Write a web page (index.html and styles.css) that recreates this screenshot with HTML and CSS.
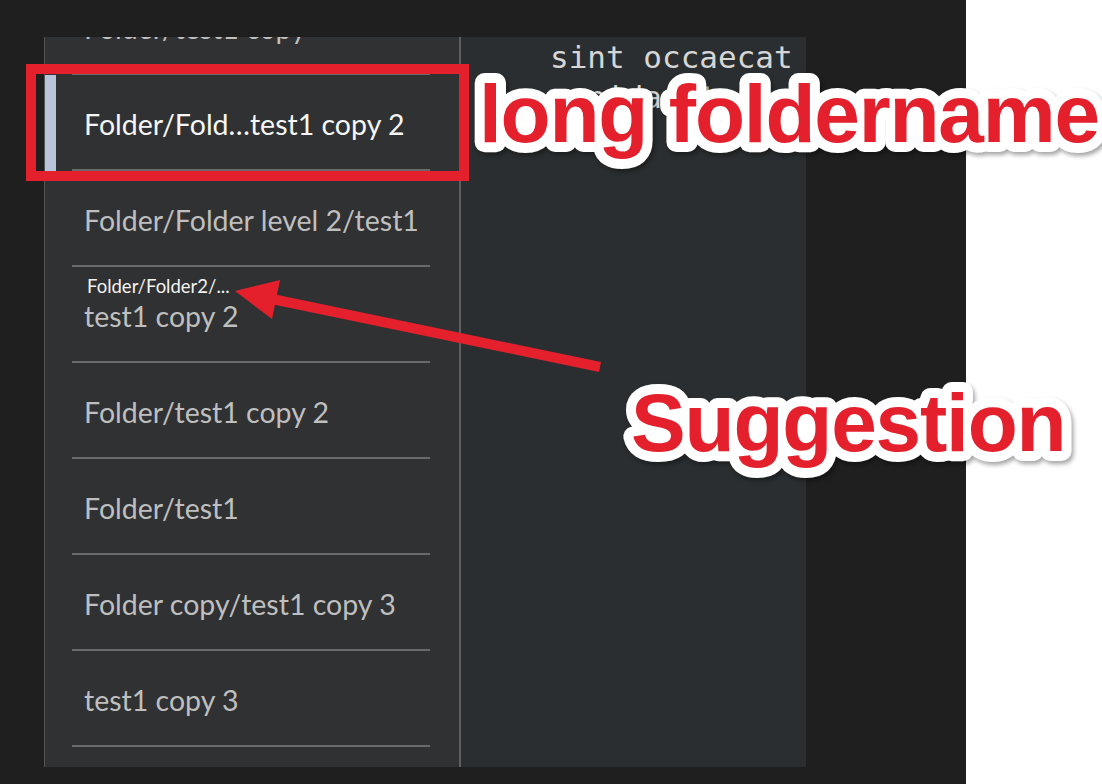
FILE: index.html
```html
<!DOCTYPE html>
<html lang="en">
<head>
    <meta charset="UTF-8">
    <title>Notes - long foldername</title>
    <link rel="stylesheet" href="styles.css">
</head>
<body>
    <div class="screen">
        <div class="window">
            <div class="list">
                <div class="item"><div class="row"><span class="name">Folder/test1 copy</span></div></div>
                <div class="item selected"><div class="row"><span class="name">Folder/Fold…test1 copy 2</span></div></div>
                <div class="item"><div class="row"><span class="name">Folder/Folder level 2/test1</span></div></div>
                <div class="item">
                    <div class="row two-line">
                        <span class="path">Folder/Folder2/...</span>
                        <span class="name">test1 copy 2</span>
                    </div>
                </div>
                <div class="item"><div class="row"><span class="name">Folder/test1 copy 2</span></div></div>
                <div class="item"><div class="row"><span class="name">Folder/test1</span></div></div>
                <div class="item"><div class="row"><span class="name">Folder copy/test1 copy 3</span></div></div>
                <div class="item"><div class="row"><span class="name">test1 copy 3</span></div></div>
                <div class="item"><div class="row"><span class="name">test1 copy 4</span></div></div>
            </div>
            <div class="editor">
                <pre>sint occaecat
cupidatat non</pre>
            </div>
        </div>
    </div>

    <!-- annotations drawn on top of the screenshot -->
    <svg class="marks" width="1102" height="784" viewBox="0 0 1102 784">
        <rect class="box" x="31" y="69" width="433" height="107"></rect>
        <line class="shaft" x1="600" y1="367" x2="272" y2="299"></line>
        <polygon class="head" points="235,291 280,280 272,319"></polygon>
        <text class="label" x="479" y="142">long foldername</text>
        <text class="label" x="631" y="451">Suggestion</text>
    </svg>
</body>
</html>
```

FILE: styles.css
```css
body { margin: 0; background-color: #ffffff; font-family: Lato, "Noto Sans", sans-serif; position: relative; width: 1102px; height: 784px; overflow: hidden; }
.screen { width: 966px; height: 784px; background-color: #1f1f1f; padding: 37px 0 0 44px; box-sizing: border-box; }
.window { display: flex; width: 762px; height: 730px; overflow: hidden; }

.list { width: 417px; flex-shrink: 0; box-sizing: border-box; background-color: #303132; border-left: 1px solid #555657; border-right: 2px solid #5e5f60; }
.list .item:first-child { margin-top: -58px; }
.item { display: flex; height: 96px; }
.item.selected { box-shadow: inset 11px 0 0 #b7c4d9; }
.row { flex: 1; display: flex; flex-direction: column; margin: 0 29px 0 27px; padding: 32px 0 0 12px; border-bottom: 2px solid #6a6a6a; box-sizing: border-box; }
.row.two-line { padding-top: 8px; }
.name { font-size: 28.5px; color: #bfbfbf; white-space: nowrap; line-height: 34px; }
.selected .name { color: #f6f6f6; }
.path { font-size: 18.5px; color: #f4f4f4; line-height: 22px; padding-left: 3px; }
.two-line .name { margin-top: 2px; }

.editor { flex: 1; background-color: #2b2e30; padding-left: 89px; }
.editor pre { margin: 0; font-family: "DejaVu Sans Mono", monospace; font-size: 31px; line-height: 40px; color: #d6d6d6; }

.marks { position: absolute; left: 0; top: 0; pointer-events: none; }
.box { fill: none; stroke: #e3202c; stroke-width: 10; }
.shaft { stroke: #e3202c; stroke-width: 10; }
.head { fill: #e3202c; }
.label { font-family: "Liberation Sans", Arial, sans-serif; font-weight: bold; font-size: 82px; letter-spacing: -1.2px; fill: #e3202c; stroke: #ffffff; stroke-width: 20px; stroke-linejoin: round; paint-order: stroke; filter: drop-shadow(2px 3px 2px rgba(0, 0, 0, 0.35)); }
```
